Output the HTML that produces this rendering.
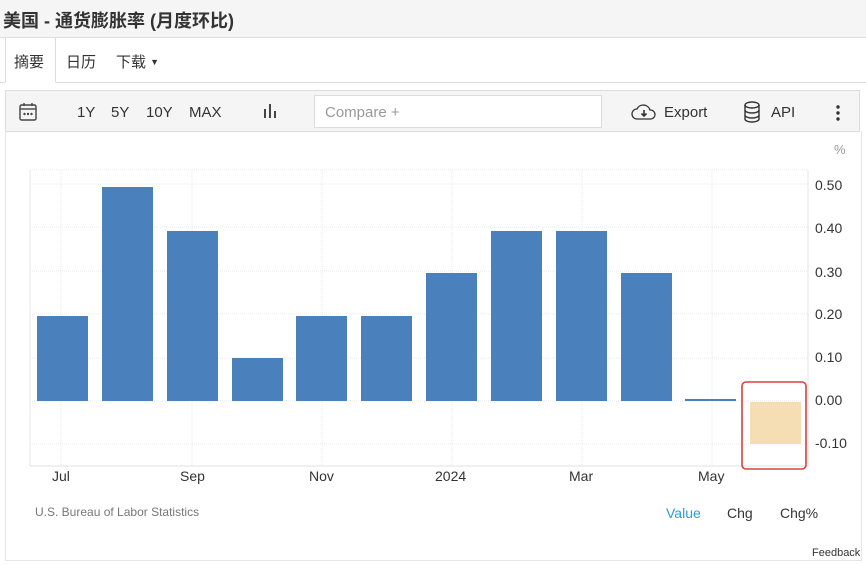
<!DOCTYPE html>
<html><head><meta charset="utf-8"><style>
*{margin:0;padding:0;box-sizing:border-box}
body{width:866px;height:565px;background:#fff;font-family:"Liberation Sans","Noto Sans CJK SC",sans-serif;position:relative;overflow:hidden;color:#333}
.title{position:absolute;left:0;top:0;width:866px;height:38px;background:#f5f5f5;border-bottom:1px solid #ddd;font-size:18px;font-weight:bold;padding:7px 0 0 3px;color:#333}
.tabs{position:absolute;top:38px;left:0;width:866px;height:45px;border-bottom:1px solid #ddd;font-size:15px}
.tab{position:absolute;top:13px}
.active{position:absolute;left:5px;top:0;width:51px;height:45px;border:1px solid #ddd;border-bottom:1px solid #fff;border-top:none;background:#fff}
.tb{position:absolute;top:90px;left:5px;width:855px;height:42px;background:#f5f5f5;border:1px solid #ddd;font-size:15px}
.tb span{position:absolute;top:13px}
.cmp{position:absolute;left:308px;top:4px;width:288px;height:33px;background:#fff;border:1px solid #ddd;color:#999;padding:8px 10px;font-size:15px}
.chart{position:absolute;top:131px;left:5px;width:857px;height:430px;border:1px solid #e6e6e6;border-top:none}
.ax{position:absolute;font-size:14px;color:#333}
</style></head><body>
<div class="title">美国 - 通货膨胀率 (月度环比)</div>
<div class="tabs"><div class="active"></div>
<span class="tab" style="left:14px">摘要</span><span class="tab" style="left:66px">日历</span><span class="tab" style="left:116px">下载 <span style="font-size:9px;position:relative;top:-2px">▼</span></span></div>
<div class="tb">
<svg style="position:absolute;left:12px;top:11px" width="20" height="20" viewBox="0 0 20 20" fill="none" stroke="#444" stroke-width="1.4"><rect x="2" y="3" width="16" height="15" rx="1.5"/><line x1="2" y1="7" x2="18" y2="7"/><line x1="6" y1="1" x2="6" y2="4"/><line x1="14" y1="1" x2="14" y2="4"/><circle cx="6.5" cy="12" r=".5" fill="#444"/><circle cx="10" cy="12" r=".5" fill="#444"/><circle cx="13.5" cy="12" r=".5" fill="#444"/></svg>
<span style="left:71px">1Y</span><span style="left:105px">5Y</span><span style="left:140px">10Y</span><span style="left:183px">MAX</span>
<svg style="position:absolute;left:257px;top:12px" width="16" height="16"><rect x="1" y="6" width="2" height="9" fill="#444"/><rect x="6" y="1" width="2" height="14" fill="#444"/><rect x="11" y="8" width="2" height="7" fill="#444"/></svg>
<div class="cmp">Compare +</div>
<svg style="position:absolute;left:625px;top:12px" width="26" height="18" viewBox="0 0 26 18" fill="none" stroke="#333" stroke-width="1.3"><path d="M7 16H6a5 5 0 0 1 0-10 7 7 0 0 1 13 1 4.5 4.5 0 0 1 1 9H7z"/><path d="M13 7v6M10.5 10.5L13 13l2.5-2.5" stroke-width="1.6"/></svg>
<span style="left:658px">Export</span>
<svg style="position:absolute;left:737px;top:10px" width="18" height="22" viewBox="0 0 18 22" fill="none" stroke="#333" stroke-width="1.4"><ellipse cx="9" cy="4" rx="7" ry="3"/><path d="M2 4v14c0 1.7 3 3 7 3s7-1.3 7-3V4M2 9c0 1.7 3 3 7 3s7-1.3 7-3M2 14c0 1.7 3 3 7 3s7-1.3 7-3"/></svg>
<span style="left:765px">API</span>
<svg style="position:absolute;left:829px;top:13px" width="6" height="18"><circle cx="3" cy="3" r="1.7" fill="#333"/><circle cx="3" cy="9" r="1.7" fill="#333"/><circle cx="3" cy="15" r="1.7" fill="#333"/></svg>
</div>
<div class="chart"></div>
<svg style="position:absolute;left:0;top:0" width="866" height="565">
<g stroke="#e8e8e8" stroke-dasharray="1,1">
<line x1="30" y1="170" x2="808" y2="170"/>
<line x1="30" y1="184" x2="808" y2="184"/><line x1="30" y1="227" x2="808" y2="227"/><line x1="30" y1="271" x2="808" y2="271"/><line x1="30" y1="314" x2="808" y2="314"/><line x1="30" y1="358" x2="808" y2="358"/><line x1="30" y1="401" x2="808" y2="401"/><line x1="30" y1="444" x2="808" y2="444"/>
<line x1="61" y1="170" x2="61" y2="466"/><line x1="192" y1="170" x2="192" y2="466"/><line x1="322" y1="170" x2="322" y2="466"/><line x1="452" y1="170" x2="452" y2="466"/><line x1="582" y1="170" x2="582" y2="466"/><line x1="712" y1="170" x2="712" y2="466"/>
</g>
<line x1="30" y1="170" x2="30" y2="466" stroke="#e6e6e6"/><line x1="808" y1="170" x2="808" y2="466" stroke="#e6e6e6"/><line x1="30" y1="466" x2="808" y2="466" stroke="#e0e0e0"/>
<g fill="#4a81bd">
<rect x="37" y="316" width="51" height="85"/><rect x="102" y="187" width="51" height="214"/><rect x="167" y="231" width="51" height="170"/><rect x="232" y="358" width="51" height="43"/><rect x="296" y="316" width="51" height="85"/><rect x="361" y="316" width="51" height="85"/><rect x="426" y="273" width="51" height="128"/><rect x="491" y="231" width="51" height="170"/><rect x="556" y="231" width="51" height="170"/><rect x="621" y="273" width="51" height="128"/><rect x="685" y="399" width="51" height="2"/>
</g>
<rect x="750" y="402" width="51" height="42" fill="#f5deb3"/>
<rect x="742" y="382" width="64" height="87" rx="4" fill="none" stroke="#d9413d" stroke-width="1.6"/>
</svg>
<span class="ax" style="left:834px;top:142px;color:#999;font-size:13px">%</span>
<span class="ax" style="left:815px;top:177px">0.50</span><span class="ax" style="left:815px;top:220px">0.40</span><span class="ax" style="left:815px;top:264px">0.30</span><span class="ax" style="left:815px;top:306px">0.20</span><span class="ax" style="left:815px;top:349px">0.10</span><span class="ax" style="left:815px;top:392px">0.00</span><span class="ax" style="left:815px;top:435px">-0.10</span>
<span class="ax" style="left:52px;top:468px">Jul</span><span class="ax" style="left:180px;top:468px">Sep</span><span class="ax" style="left:309px;top:468px">Nov</span><span class="ax" style="left:435px;top:468px">2024</span><span class="ax" style="left:569px;top:468px">Mar</span><span class="ax" style="left:698px;top:468px">May</span>
<span class="ax" style="left:35px;top:505px;font-size:12px;color:#777">U.S. Bureau of Labor Statistics</span>
<span class="ax" style="left:666px;top:505px;color:#2e9bd6">Value</span><span class="ax" style="left:727px;top:505px">Chg</span><span class="ax" style="left:780px;top:505px">Chg%</span>
<span class="ax" style="left:812px;top:547px;font-size:11px">Feedback</span>
</body></html>
